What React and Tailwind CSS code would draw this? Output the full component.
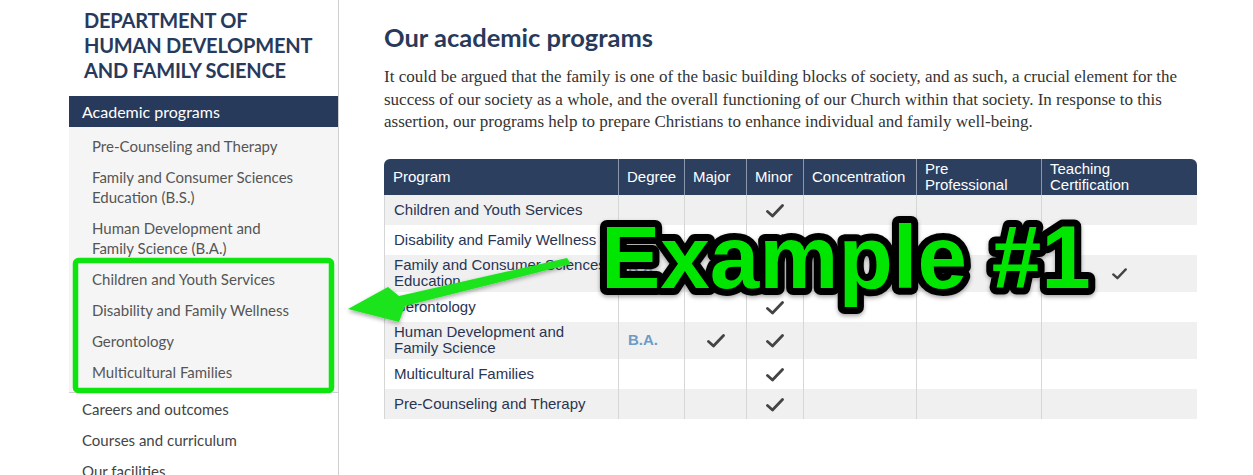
import React from 'react';

const sideFont = { fontFamily: 'Lato, "Open Sans", sans-serif' };

const subItems = [
    'Pre-Counseling and Therapy',
    'Family and Consumer Sciences Education (B.S.)',
    'Human Development and Family Science (B.A.)',
    'Children and Youth Services',
    'Disability and Family Wellness',
    'Gerontology',
    'Multicultural Families',
];

const otherItems = ['Careers and outcomes', 'Courses and curriculum', 'Our facilities'];

const columns = [
    { label: 'Program', w: 'w-[234px]' },
    { label: 'Degree', w: 'w-[66px]' },
    { label: 'Major', w: 'w-[62px]' },
    { label: 'Minor', w: 'w-[57px]' },
    { label: 'Concentration', w: 'w-[113px]' },
    { label: 'Pre Professional', w: 'w-[125px]' },
    { label: 'Teaching Certification', w: 'w-[156px]' },
];

const rows = [
    { name: 'Children and Youth Services', minor: true },
    { name: 'Disability and Family Wellness', minor: true },
    { name: 'Family and Consumer Sciences Education', degree: 'B.S.', major: true, teaching: true },
    { name: 'Gerontology', minor: true },
    { name: 'Human Development and Family Science', degree: 'B.A.', major: true, minor: true },
    { name: 'Multicultural Families', minor: true },
    { name: 'Pre-Counseling and Therapy', minor: true },
];

const Check = ({ small }) => (
    <svg width={small ? 15 : 18} height={small ? 12 : 14} viewBox="0 0 18 14" className="inline-block align-middle">
        <path d="M1.5 7.5 L6.5 12 L16.5 1.5" fill="none" stroke="#444" strokeWidth="2.8" strokeLinecap="round" strokeLinejoin="round" />
    </svg>
);

const Sidebar = () => (
    <aside className="w-[270px] shrink-0 border-r border-[#cfcfcf] h-full" style={sideFont}>
        <h2 className="pl-[15px] pt-[8px] text-[20px] leading-[25px] font-bold text-[#283a5b] tracking-[-0.2px]">
            DEPARTMENT OF<br />HUMAN DEVELOPMENT<br />AND FAMILY SCIENCE
        </h2>
        <div className="mt-[13px] h-[31px] bg-[#283a5b] text-white text-[16px] flex items-center pl-[13px]">
            Academic programs
        </div>
        <ul className="bg-[#f5f5f5] pt-[3px] pb-[5px] border-b border-[#cfcfcf]">
            {subItems.map(item => (
                <li key={item} className="pl-[23px] pr-[40px] py-[5.5px] text-[15px] leading-[20px] text-[#555]">
                    {item}
                </li>
            ))}
        </ul>
        <ul>
            {otherItems.map(item => (
                <li key={item} className="pl-[13px] py-[5.5px] text-[15px] leading-[20px] text-[#444]">
                    {item}
                </li>
            ))}
        </ul>
    </aside>
);

const ProgramsTable = () => (
    <table className="mt-[25px] w-[813px] table-fixed border-separate border-spacing-0 text-[15px]" style={{ fontFamily: '"Liberation Sans", Arial, sans-serif' }}>
        <thead>
            <tr className="text-white">
                {columns.map((col, i) => (
                    <th
                        key={col.label}
                        className={`${col.w} h-[36px] bg-[#2d3f5f] text-left font-normal leading-[16px] px-[8px] py-[1px] align-middle border-l border-[#8a96aa] ${i === 0 ? 'rounded-tl-[6px] border-l-0 pl-[9px]' : ''} ${i === columns.length - 1 ? 'rounded-tr-[6px]' : ''}`}
                    >
                        {col.label}
                    </th>
                ))}
            </tr>
        </thead>
        <tbody className="text-[#283553]">
            {rows.map((row, idx) => {
                const bg = idx % 2 === 0 ? 'bg-[#f0f0f0]' : 'bg-white';
                const cell = `${bg} h-[30px] py-[2.5px] leading-[16px] border-l border-[#d6d6d6]`;
                return (
                    <tr key={row.name}>
                        <td className={`${cell} pl-[9px] pr-[10px]`}>{row.name}</td>
                        <td className={`${cell} pl-[9px] font-bold text-[#6b9bc6]`}>{row.degree}</td>
                        <td className={`${cell} text-center`}>{row.major && <Check />}</td>
                        <td className={`${cell} text-center`}>{row.minor && <Check />}</td>
                        <td className={cell}></td>
                        <td className={cell}></td>
                        <td className={`${cell} text-center`}>{row.teaching && <Check small />}</td>
                    </tr>
                );
            })}
        </tbody>
    </table>
);

const Annotation = () => (
    <svg className="absolute inset-0 pointer-events-none" width="1253" height="475" viewBox="0 0 1253 475">
        <defs>
            <filter id="shadow" x="-10%" y="-10%" width="120%" height="130%">
                <feDropShadow dx="0" dy="2" stdDeviation="2" floodColor="#000" floodOpacity="0.35" />
            </filter>
        </defs>
        <rect x="75.5" y="260.5" width="256" height="130" rx="3" fill="none" stroke="#0ee40e" strokeWidth="5.5" />
        <polygon
            points="567,258 571,264 405,306 399,322 348,309 388,287 399,296"
            fill="#1ee41e"
            filter="url(#shadow)"
        />
        <text
            x="601"
            y="288"
            fontFamily="Liberation Sans, Arial, sans-serif"
            fontWeight="700"
            fontSize="89"
            fill="#00e600"
            stroke="#000"
            strokeWidth="14"
            strokeLinejoin="round"
            paintOrder="stroke"
            filter="url(#shadow)"
        >
            Example #1
        </text>
    </svg>
);

export default function App() {
    return (
        <div className="relative w-[1253px] h-[475px] overflow-hidden bg-white">
            <div className="flex h-full pl-[69px]">
                <Sidebar />
                <main className="pl-[45px] pt-[21px]">
                    <h1 className="text-[25.5px] leading-[32px] font-bold text-[#283a5b]" style={sideFont}>
                        Our academic programs
                    </h1>
                    <p className="mt-[13px] w-[800px] text-[17px] leading-[22.5px] text-[#333]" style={{ fontFamily: '"Liberation Serif", "Times New Roman", serif' }}>
                        It could be argued that the family is one of the basic building blocks of society, and as such, a crucial element for the success of our society as a whole, and the overall functioning of our Church within that society. In response to this assertion, our programs help to prepare Christians to enhance individual and family well-being.
                    </p>
                    <ProgramsTable />
                </main>
            </div>
            <Annotation />
        </div>
    );
}
